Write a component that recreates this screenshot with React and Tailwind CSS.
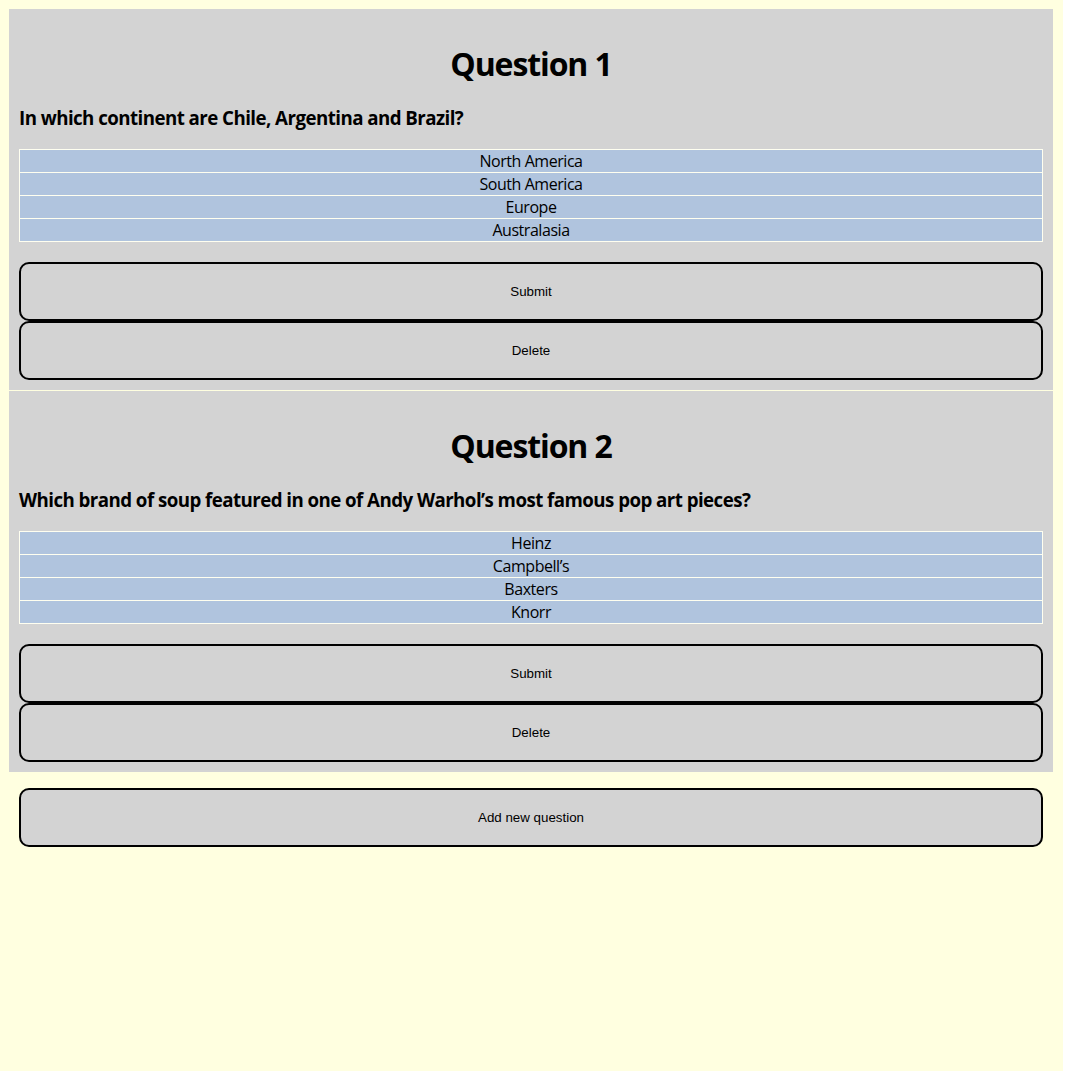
const questions = [
	{
		id: 1,
		title: "Question 1",
		text: "In which continent are Chile, Argentina and Brazil?",
		answers: ["North America", "South America", "Europe", "Australasia"],
	},
	{
		id: 2,
		title: "Question 2",
		text: "Which brand of soup featured in one of Andy Warhol\u2019s most famous pop art pieces?",
		answers: ["Heinz", "Campbell\u2019s", "Baxters", "Knorr"],
	},
];

const segoe = "font-['Segoe_UI','Open_Sans',sans-serif]";

const Button = ({ children }) => (
	<button className="block w-full h-[59px] border-2 border-black rounded-[10px] bg-[#d3d3d3] text-[13.33px] text-black font-['Liberation_Sans',Arial,sans-serif]">
		{children}
	</button>
);

const QuestionCard = ({ question }) => {
	return (
		<div className={`bg-[#d3d3d3] px-[10px] pt-[10px] pb-[10px] text-black ${segoe}`}>
			<h1 className="mt-[21px] text-[32px] leading-[48px] font-bold text-center tracking-[-1.1px]">{question.title}</h1>
			<h3 className="mt-[18px] text-[18.72px] leading-[24px] font-bold tracking-[-0.55px]">{question.text}</h3>

			<div className="mt-[19px] flex flex-col">
				{question.answers.map((answer, i) => (
					<div
						key={answer}
						className={`h-[23px] border-x border-t border-[#fffff0] bg-[#b0c4de] text-[16px] leading-[22px] text-center tracking-[-0.45px] ${
							i === question.answers.length - 1 ? "border-b h-[24px]" : ""
						}`}
					>
						{answer}
					</div>
				))}
			</div>

			<div className="mt-[20px]">
				<Button>Submit</Button>
				<Button>Delete</Button>
			</div>
		</div>
	);
};

export default function App() {
	return (
		<div className="w-[1071px] h-[1071px] bg-white flex">
			<div className="w-[1063px] h-full bg-[#ffffe0] pt-[9px] px-[9px]">
				<div className="flex flex-col gap-px w-[1044px]">
					{questions.map((q) => (
						<QuestionCard key={q.id} question={q} />
					))}
				</div>
				<div className="px-[10px] mt-[16px] w-[1044px]">
					<Button>Add new question</Button>
				</div>
			</div>
		</div>
	);
}
